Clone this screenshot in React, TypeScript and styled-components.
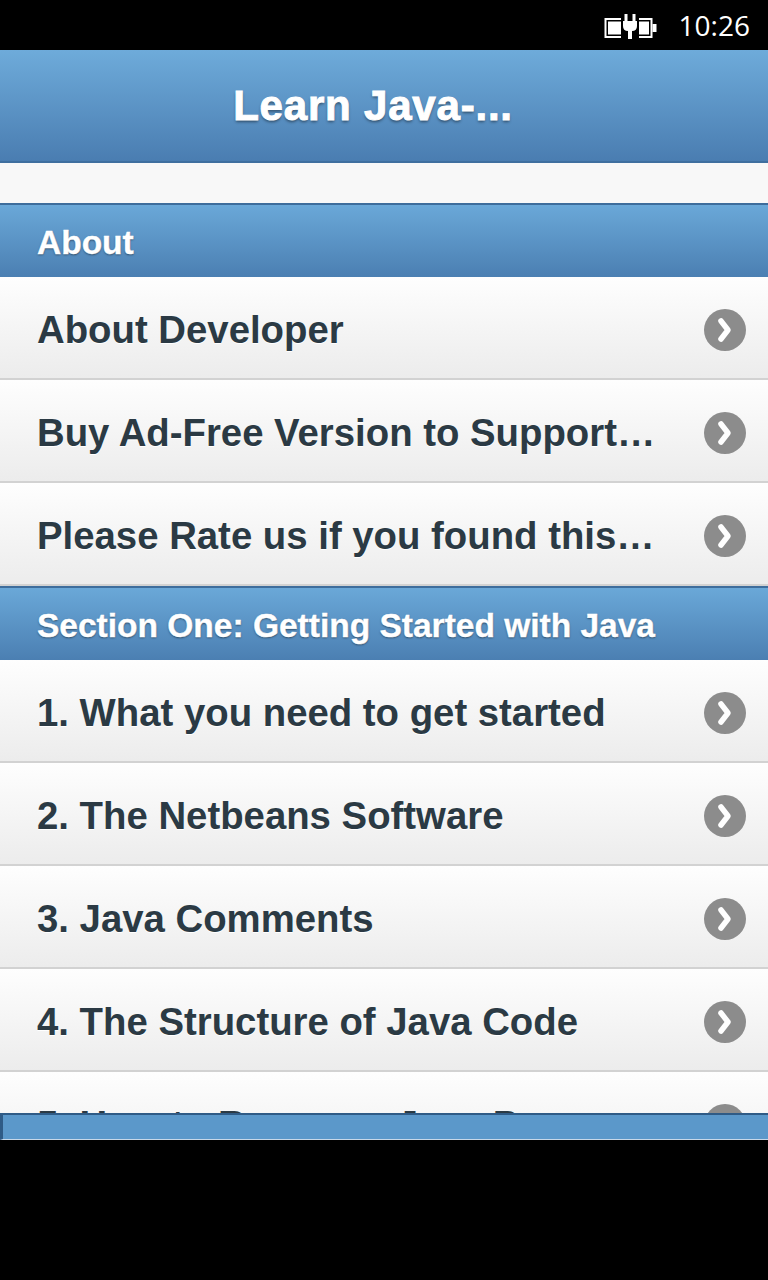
import React from 'react'
import styled, { createGlobalStyle } from 'styled-components'

const GlobalStyle = createGlobalStyle`
  html, body {
    margin: 0;
    padding: 0;
    background: #000;
  }
  body {
    font-family: 'Liberation Sans', Arial, sans-serif;
  }
`

const Screen = styled.div`
  width: 768px;
  height: 1280px;
  background: #000;
  display: flex;
  flex-direction: column;
`

const StatusBar = styled.div`
  height: 50px;
  flex-shrink: 0;
  display: flex;
  align-items: center;
  justify-content: flex-end;
  gap: 21px;
  padding-right: 18px;
  color: #fff;
`

const Clock = styled.span`
  font-family: 'Open Sans', sans-serif;
  font-size: 28px;
  line-height: 1;
`

const Viewport = styled.div`
  position: relative;
  height: 1090px;
  flex-shrink: 0;
  overflow: hidden;
  background: #f8f8f8;
`

const Header = styled.header`
  height: 111px;
  border-bottom: 2px solid #3f6f9f;
  background: linear-gradient(#6eabda, #4a7db1);
  display: flex;
  align-items: center;
  justify-content: center;
  padding-right: 22px;
`

const Title = styled.h1`
  margin: 0;
  font-size: 42px;
  font-weight: 700;
  letter-spacing: 0.8px;
  color: #fff;
  -webkit-text-stroke: 1px #fff;
  text-shadow: 0 2px 3px rgba(0, 0, 0, 0.45);
`

const Spacer = styled.div`
  height: 40px;
  background: #f8f8f8;
`

const SectionHeader = styled.div`
  height: 74px;
  box-sizing: border-box;
  border-top: 2px solid #3e6d9c;
  background: linear-gradient(#6aa8d8, #4b7fb2);
  color: #fff;
  font-size: 33.5px;
  font-weight: 700;
  padding: 3px 0 0 37px;
  display: flex;
  align-items: center;
  -webkit-text-stroke: 0.4px #fff;
  text-shadow: 0 1px 2px rgba(0, 0, 0, 0.5);
`

const Row = styled.div`
  height: 96px;
  border-bottom: 2px solid #d2d2d2;
  background: linear-gradient(#fefefe, #ececec);
  display: flex;
  align-items: center;
  gap: 44px;
  padding: 5px 22px 0 37px;
`

const RowLabel = styled.span`
  flex: 1;
  min-width: 0;
  white-space: nowrap;
  overflow: hidden;
  text-overflow: ellipsis;
  font-size: 38.35px;
  font-weight: 700;
  color: #2b3a44;
  text-shadow: 0 1px 0 #fff;
`

const Chevron = styled.span`
  width: 42px;
  height: 42px;
  border-radius: 50%;
  background: #8c8c8c;
  flex-shrink: 0;
  display: flex;
  align-items: center;
  justify-content: center;
`

const BottomBar = styled.div`
  position: absolute;
  left: 0;
  right: 0;
  bottom: 0;
  height: 24px;
  border-top: 2px solid #2f5b86;
  border-left: 3px solid #2f5b86;
  border-bottom: 1px solid #c8d8e8;
  background: #5b98ca;
`

const Battery = () => (
  <svg width="54" height="28" viewBox="0 0 54 28">
    <rect x="1.5" y="8" width="46" height="18" fill="none" stroke="#fff" strokeWidth="2" />
    <rect x="48.5" y="13" width="4" height="8" fill="#fff" />
    <rect x="4" y="10.5" width="41" height="13" fill="#fff" />
    <rect x="17" y="2" width="18" height="26" fill="#000" />
    <rect x="20.5" y="3" width="3" height="7" fill="#fff" />
    <rect x="28.5" y="3" width="3" height="7" fill="#fff" />
    <path d="M19 10 H33 V15 Q33 20 28 20 V28 H24 V20 Q19 20 19 15 Z" fill="#fff" />
  </svg>
)

const ChevronIcon = () => (
  <Chevron>
    <svg width="42" height="42" viewBox="0 0 42 42">
      <path d="M17 12 L24 21 L17 30" fill="none" stroke="#fff" strokeWidth="5.5" strokeLinecap="round" strokeLinejoin="round" />
    </svg>
  </Chevron>
)

const sections = [
  {
    title: 'About',
    items: ['About Developer', 'Buy Ad-Free Version to Support the Developer', 'Please Rate us if you found this app useful'],
  },
  {
    title: 'Section One: Getting Started with Java',
    items: [
      '1. What you need to get started',
      '2. The Netbeans Software',
      '3. Java Comments',
      '4. The Structure of Java Code',
      '5. How to Run your Java Programs',
    ],
  },
]

const App = () => (
  <Screen>
    <GlobalStyle />
    <StatusBar>
      <Battery />
      <Clock>10:26</Clock>
    </StatusBar>
    <Viewport>
      <Header>
        <Title>Learn Java-...</Title>
      </Header>
      <Spacer />
      {sections.map((section) => (
        <React.Fragment key={section.title}>
          <SectionHeader>{section.title}</SectionHeader>
          {section.items.map((item) => (
            <Row key={item}>
              <RowLabel>{item}</RowLabel>
              <ChevronIcon />
            </Row>
          ))}
        </React.Fragment>
      ))}
      <BottomBar />
    </Viewport>
  </Screen>
)

export default App
